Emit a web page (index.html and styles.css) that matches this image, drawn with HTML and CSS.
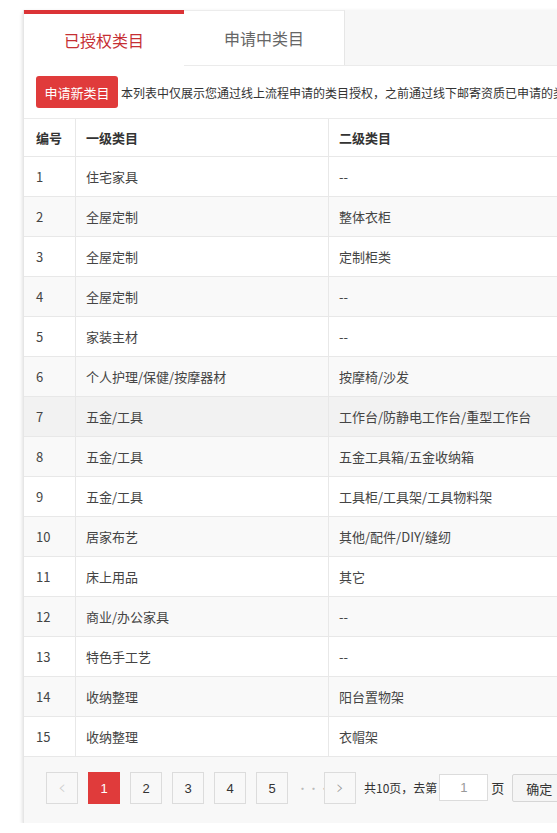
FILE: index.html
```html
<!DOCTYPE html>
<html lang="zh-CN">
<head>
<meta charset="utf-8">
<title>类目管理</title>
<link rel="stylesheet" href="styles.css">
</head>
<body>
<div class="panel">
  <div class="tabs">
    <div class="tab active">已授权类目</div>
    <div class="tab">申请中类目</div>
  </div>
  <div class="toolbar">
    <button class="btn-primary">申请新类目</button>
    <span class="notice">本列表中仅展示您通过线上流程申请的类目授权，之前通过线下邮寄资质已申请的类目授权不在此列表中展示</span>
  </div>
  <div class="table">
    <div class="row head"><div class="c">编号</div><div class="c">一级类目</div><div class="c">二级类目</div></div>
    <div class="row"><div class="c">1</div><div class="c">住宅家具</div><div class="c">--</div></div>
    <div class="row"><div class="c">2</div><div class="c">全屋定制</div><div class="c">整体衣柜</div></div>
    <div class="row"><div class="c">3</div><div class="c">全屋定制</div><div class="c">定制柜类</div></div>
    <div class="row"><div class="c">4</div><div class="c">全屋定制</div><div class="c">--</div></div>
    <div class="row"><div class="c">5</div><div class="c">家装主材</div><div class="c">--</div></div>
    <div class="row"><div class="c">6</div><div class="c">个人护理/保健/按摩器材</div><div class="c">按摩椅/沙发</div></div>
    <div class="row hover"><div class="c">7</div><div class="c">五金/工具</div><div class="c">工作台/防静电工作台/重型工作台</div></div>
    <div class="row"><div class="c">8</div><div class="c">五金/工具</div><div class="c">五金工具箱/五金收纳箱</div></div>
    <div class="row"><div class="c">9</div><div class="c">五金/工具</div><div class="c">工具柜/工具架/工具物料架</div></div>
    <div class="row"><div class="c">10</div><div class="c">居家布艺</div><div class="c">其他/配件/DIY/缝纫</div></div>
    <div class="row"><div class="c">11</div><div class="c">床上用品</div><div class="c">其它</div></div>
    <div class="row"><div class="c">12</div><div class="c">商业/办公家具</div><div class="c">--</div></div>
    <div class="row"><div class="c">13</div><div class="c">特色手工艺</div><div class="c">--</div></div>
    <div class="row"><div class="c">14</div><div class="c">收纳整理</div><div class="c">阳台置物架</div></div>
    <div class="row"><div class="c">15</div><div class="c">收纳整理</div><div class="c">衣帽架</div></div>
  </div>
  <div class="pager">
    <span class="pg arrow disabled">&lsaquo;</span>
    <span class="pg current">1</span>
    <span class="pg">2</span>
    <span class="pg">3</span>
    <span class="pg">4</span>
    <span class="pg">5</span>
    <span class="dots">···</span>
    <span class="pg arrow next">&rsaquo;</span>
    <span class="total">共10页，去第</span>
    <input class="goto" type="text" value="1">
    <span class="unit">页</span>
    <button class="confirm">确定</button>
  </div>
</div>
</body>
</html>
```
FILE: styles.css
```css
html, body {
  margin: 0;
  padding: 0;
  background: #fff;
  overflow: hidden;
}
body {
  font-family: "Noto Sans CJK SC", "Microsoft YaHei", "Liberation Sans", sans-serif;
  font-size: 13px;
  color: #333;
}
.panel {
  margin: 10px 0 0 23px;
  width: 720px;
  background: #fff;
  border-left: 1px solid #e6e6e6;
  box-shadow: 0 2px 4px rgba(0, 0, 0, 0.18);
}
.tabs {
  display: flex;
  height: 55px;
  background: #f7f7f7;
  border-bottom: 1px solid #ebebeb;
}
.tab {
  box-sizing: border-box;
  width: 161px;
  height: 55px;
  display: flex;
  align-items: center;
  justify-content: center;
  font-size: 16px;
  color: #666;
  background: #fff;
  border-top: 1px solid #ececec;
  border-right: 1px solid #e6e6e6;
}
.tab.active {
  width: 160px;
  color: #c62f33;
  border-top: 4px solid #db3336;
  border-right: 0;
  height: 56px;
  padding-bottom: 1px;
}
.toolbar {
  box-sizing: border-box;
  height: 53px;
  display: flex;
  align-items: center;
  padding: 0 12px;
  border-bottom: 1px solid #ebebeb;
  white-space: nowrap;
}
.btn-primary {
  width: 82px;
  height: 32px;
  border: 0;
  border-radius: 3px;
  background: #e03b3b;
  color: #fff;
  font: inherit;
  font-size: 13px;
  padding: 0;
  margin-right: 3px;
}
.notice {
  font-size: 12px;
  color: #333;
}
.row {
  display: grid;
  grid-template-columns: 52px 253px 1fr;
  height: 40px;
  box-sizing: border-box;
  border-bottom: 1px solid #e8e8e8;
  background: #fff;
}
.row.head {
  height: 38px;
  font-weight: bold;
  color: #333;
}
.row:nth-child(odd) {
  background: #f9f9f9;
}
.row.head {
  background: #fff;
}
.row.hover {
  background: #f2f2f2;
}
.c {
  display: flex;
  align-items: center;
  padding: 0 10px;
  border-right: 1px solid #e8e8e8;
  color: #444;
}
.head .c {
  color: #333;
}
.c:first-child {
  padding-left: 12px;
}
.pager {
  box-sizing: border-box;
  height: 66px;
  background: #f8f8f8;
  display: flex;
  align-items: flex-start;
  padding: 15px 0 0 22px;
  white-space: nowrap;
}
.pg {
  box-sizing: border-box;
  width: 32px;
  height: 32px;
  margin-right: 10px;
  display: flex;
  align-items: center;
  justify-content: center;
  border: 1px solid #dcdcdc;
  background: #f8f8f8;
  color: #333;
  font-family: "Liberation Sans", sans-serif;
  font-size: 13px;
}
.pg.arrow {
  font-size: 20px;
  color: #999;
  font-family: "DejaVu Sans", sans-serif;
  font-weight: 300;
  padding-bottom: 3px;
}
.pg.arrow.disabled {
  color: #ccc;
}
.pg.next {
  margin-right: 0;
}
.pg.current {
  background: #e03b3b;
  border-color: #e03b3b;
  color: #fff;
}
.dots {
  width: 27px;
  height: 32px;
  line-height: 32px;
  color: #bbb;
  font-size: 11px;
  margin-left: -1px;
}
.total {
  line-height: 32px;
  margin-left: 8px;
  font-size: 12px;
  color: #333;
}
.goto {
  box-sizing: border-box;
  width: 49px;
  height: 27px;
  margin: 2px 0 0 2px;
  border: 1px solid #dcdcdc;
  background: #fff;
  text-align: center;
  font: inherit;
  font-family: "Liberation Sans", sans-serif;
  color: #999;
  padding: 0;
  outline: none;
}
.unit {
  line-height: 32px;
  margin: 0 8px 0 3px;
}
.confirm {
  box-sizing: border-box;
  height: 28px;
  width: 60px;
  margin-top: 2px;
  border: 1px solid #d6d6d6;
  border-radius: 2px;
  background: #f5f5f5;
  font: inherit;
  color: #333;
  text-align: left;
  padding: 0 0 0 13px;
}
```
